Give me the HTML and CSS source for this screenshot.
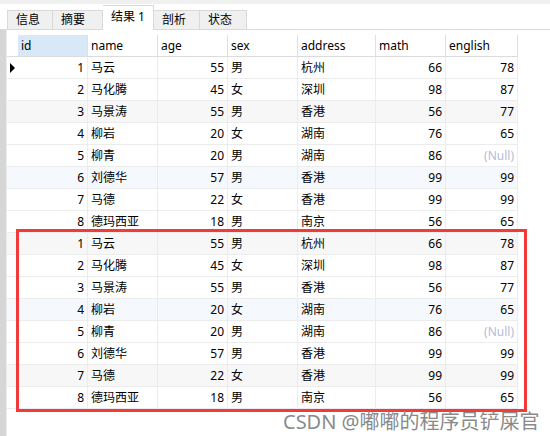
FILE: index.html
```html
<!DOCTYPE html>
<html lang="zh">

<head>
    <meta charset="UTF-8">
    <meta name="viewport" content="width=device-width, initial-scale=1.0">
    <title>结果 1</title>
    <link rel="stylesheet" href="styles.css">
</head>

<body>
    <div class="topstrip"></div>
    <div class="tabs">
        <div class="tab w46">信息</div>
        <div class="tab w50">摘要</div>
        <div class="tab w51 active">结果 1</div>
        <div class="tab w46">剖析</div>
        <div class="tab w47">状态</div>
    </div>
    <div class="content">
        <div class="gutter"></div>
        <div class="grid" id="grid">
            <div class="row head">
                <div class="cell ind"></div>
                <div class="cell sel">id</div>
                <div class="cell">name</div>
                <div class="cell">age</div>
                <div class="cell">sex</div>
                <div class="cell">address</div>
                <div class="cell">math</div>
                <div class="cell">english</div>
            </div>
            <!-- 数据行由脚本生成 -->
        </div>
    </div>
    <div class="highlight"></div>
    <div class="watermark">CSDN @嘟嘟的程序员铲屎官</div>

    <script>
        const students = [
            [1, "马云", 55, "男", "杭州", 66, 78],
            [2, "马化腾", 45, "女", "深圳", 98, 87],
            [3, "马景涛", 55, "男", "香港", 56, 77],
            [4, "柳岩", 20, "女", "湖南", 76, 65],
            [5, "柳青", 20, "男", "湖南", 86, null],
            [6, "刘德华", 57, "男", "香港", 99, 99],
            [7, "马德", 22, "女", "香港", 99, 99],
            [8, "德玛西亚", 18, "男", "南京", 56, 65]
        ];

        const rows = students.concat(students);
        const grid = document.getElementById("grid");

        rows.forEach((s, i) => {
            let cls = "row";
            if (i % 6 === 2) cls += " gray";
            if (i % 6 === 5) cls += " blue";
            const english = s[6] === null
                ? '<span class="null">(Null)</span>'
                : s[6];
            grid.innerHTML += `
                <div class="${cls}">
                    <div class="cell ind">${i === 0 ? '<span class="arrow"></span>' : ''}</div>
                    <div class="cell num">${s[0]}</div>
                    <div class="cell">${s[1]}</div>
                    <div class="cell num">${s[2]}</div>
                    <div class="cell">${s[3]}</div>
                    <div class="cell">${s[4]}</div>
                    <div class="cell num">${s[5]}</div>
                    <div class="cell num">${english}</div>
                </div>
            `;
        });
    </script>
</body>

</html>
```

FILE: styles.css
```css
body {
    font-family: "Noto Sans", "Noto Sans CJK SC", sans-serif;
    font-size: 12px;
    margin: 0;
    padding: 0;
    background-color: white;
    color: #000;
    width: 550px;
    height: 436px;
    overflow: hidden;
    position: relative;
}

.topstrip {
    height: 4px;
    background-color: #f0f0f0;
}

.tabs {
    display: flex;
    align-items: flex-end;
    height: 25px;
    padding-left: 7px;
    border-bottom: 1px solid #d9d9d9;
}

.tab {
    box-sizing: border-box;
    height: 19px;
    line-height: 18px;
    padding-left: 8px;
    white-space: nowrap;
    background-color: #f0f0f0;
    border-top: 1px solid #d9d9d9;
    border-right: 1px solid #d9d9d9;
}

.tab:first-child {
    border-left: 1px solid #d9d9d9;
}

.tab.active {
    height: 25px;
    line-height: 22px;
    background-color: white;
    margin-bottom: -1px;
    padding-bottom: 1px;
}

.w46 { width: 46px; }
.w47 { width: 47px; }
.w50 { width: 50px; }
.w51 { width: 51px; }

.content {
    display: flex;
    height: 406px;
}

.gutter {
    width: 7px;
    background-color: #d6d6d6;
    border-right: 1px solid #ececec;
    box-sizing: border-box;
}

.grid {
    padding-top: 5px;
}

.row {
    display: grid;
    grid-template-columns: 11px 70px 70px 70px 70px 78px 70px 72px;
    height: 21px;
    border-bottom: 1px solid #ececec;
}

.row.head {
    border-bottom: 1px solid #dcdcdc;
}

.row.gray {
    background-color: #f7f7f7;
}

.row.blue {
    background-color: #f5f9fd;
}

.cell {
    border-right: 1px solid #ececec;
    line-height: 21px;
    padding: 0 3px;
    white-space: nowrap;
    overflow: hidden;
}

.head .cell {
    border-right: 1px solid #e0e0e0;
}

.cell.ind {
    border-right: none;
    padding: 0;
    position: relative;
}

.cell.sel {
    background-color: #d9e8f6;
}

.cell.num {
    text-align: right;
}

.null {
    color: #b3bcd6;
}

.arrow {
    position: absolute;
    left: 3px;
    top: 6px;
    width: 0;
    height: 0;
    border-top: 5px solid transparent;
    border-bottom: 5px solid transparent;
    border-left: 5px solid #000;
}

.highlight {
    position: absolute;
    left: 16px;
    top: 229px;
    width: 511px;
    height: 183px;
    border: 3px solid #f33a3a;
    box-sizing: border-box;
}

.watermark {
    position: absolute;
    left: 283px;
    top: 406px;
    font-size: 20px;
    color: #8a8a8a;
    white-space: nowrap;
}
```
